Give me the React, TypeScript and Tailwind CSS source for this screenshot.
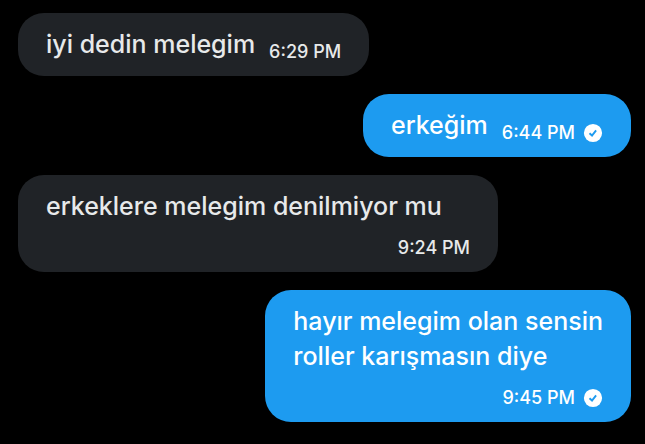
import clsx from 'clsx'

interface Message {
  id: number
  text: string
  time: string
  sent: boolean
  stacked?: boolean
}

const messages: Message[] = [
  { id: 1, text: 'iyi dedin melegim', time: '6:29 PM', sent: false },
  { id: 2, text: 'erkeğim', time: '6:44 PM', sent: true },
  { id: 3, text: 'erkeklere melegim denilmiyor mu', time: '9:24 PM', sent: false },
  { id: 4, text: 'hayır melegim olan sensin\nroller karışmasın diye', time: '9:45 PM', sent: true, stacked: true },
]

function ReadBadge() {
  return (
    <svg viewBox="0 0 20 20" className="h-5 w-5" role="img" aria-label="Read">
      <circle cx="10" cy="10" r="9.1" fill="white" />
      <path d="M6.5 10.3 L9 12.5 L13.1 7.3" fill="none" stroke="#1d9bf0" strokeWidth="1.9" />
    </svg>
  )
}

function Bubble({ message }: { message: Message }) {
  const { text, time, sent, stacked } = message

  return (
    <li
      className={clsx(
        'flex max-w-[480px] gap-x-3.5 gap-y-3.5 rounded-[26px] px-7 py-3.5 font-medium',
        sent ? 'self-end bg-[#1d9bf0] text-white' : 'self-start bg-[#202327] text-[#e7e9ea]',
        stacked ? 'flex-col' : 'flex-wrap items-end',
      )}
    >
      <p className="text-[25px] leading-[35px] whitespace-pre-line">{text}</p>
      <div className="ml-auto flex items-center gap-2 text-[18px] leading-5">
        <time>{time}</time>
        {sent && <ReadBadge />}
      </div>
    </li>
  )
}

export default function App() {
  return (
    <main className="min-h-screen bg-black pt-[13px] pr-3.5 pb-5 pl-4.5 font-['Inter',sans-serif]">
      <ul className="flex flex-col gap-4.5">
        {messages.map((message) => (
          <Bubble key={message.id} message={message} />
        ))}
      </ul>
    </main>
  )
}
